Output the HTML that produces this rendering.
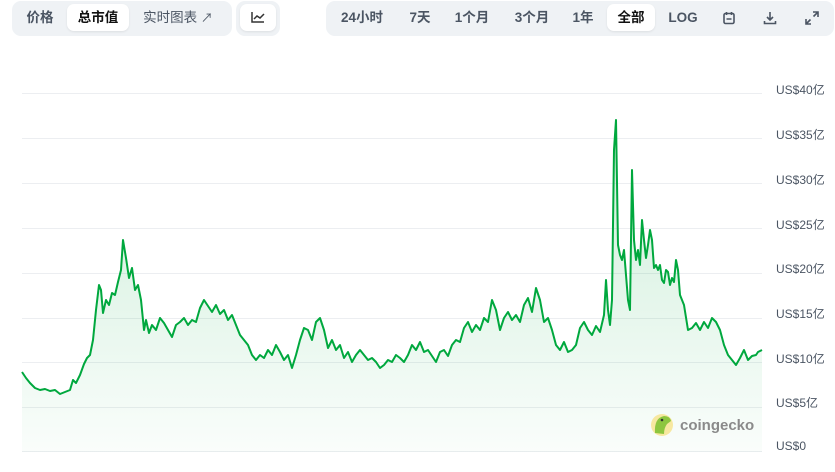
<!DOCTYPE html>
<html><head><meta charset="utf-8"><style>
body{margin:0;width:835px;height:472px;background:#fff;font-family:"Liberation Sans","Noto Sans CJK SC",sans-serif;position:relative;overflow:hidden}
.grp{position:absolute;top:1px;height:35px;background:#eff2f5;border-radius:9px}
.b{position:absolute;top:4px;height:27px;line-height:27px;font-size:13.5px;font-weight:bold;color:#4b5563;text-align:center}
.b.act{background:#fff;border-radius:7px;color:#111;box-shadow:0 1px 2px rgba(0,0,0,.08)}
.lbl{position:absolute;left:776px;font-size:12px;color:#4b5563}
</style></head><body>
<div class="grp" style="left:12px;width:220px"></div>
<div class="b" style="left:18px;width:44px">价格</div>
<div class="b act" style="left:67px;width:62px">总市值</div>
<div class="b" style="left:136px;width:84px;font-weight:normal;color:#4b5563">实时图表 <span style="font-size:12px">↗</span></div>
<div class="grp" style="left:236px;width:44px"></div>
<div class="b act" style="left:240px;width:36px"><svg width="14" height="12" viewBox="0 0 14 12" style="vertical-align:-1px"><path d="M1 1V11H13M3 8l3-3 3 2 4-4" fill="none" stroke="#333" stroke-width="1.5"/></svg></div>
<div class="grp" style="left:326px;width:508px"></div>
<div class="b" style="left:334px;width:56px">24小时</div>
<div class="b" style="left:402px;width:36px">7天</div>
<div class="b" style="left:448px;width:48px">1个月</div>
<div class="b" style="left:506px;width:52px">3个月</div>
<div class="b" style="left:568px;width:30px">1年</div>
<div class="b act" style="left:607px;width:48px">全部</div>
<div class="b" style="left:664px;width:38px">LOG</div>
<svg style="position:absolute;left:722px;top:11px" width="14" height="14" viewBox="0 0 14 14"><rect x="2" y="2.5" width="10" height="10" rx="1.5" fill="none" stroke="#4b5563" stroke-width="1.6"/><path d="M4.5 1v3M9.5 1v3M4.5 8h5" stroke="#4b5563" stroke-width="1.6"/></svg>
<svg style="position:absolute;left:763px;top:11px" width="14" height="14" viewBox="0 0 14 14"><path d="M7 1v8M4 6l3 3 3-3M1.5 10v2.5h11V10" fill="none" stroke="#4b5563" stroke-width="1.6"/></svg>
<svg style="position:absolute;left:805px;top:11px" width="14" height="14" viewBox="0 0 14 14"><path d="M8 1h5v5M13 1L8.5 5.5M6 13H1V8M1 13l4.5-4.5" fill="none" stroke="#4b5563" stroke-width="1.6"/></svg>
<svg style="position:absolute;left:0;top:0" width="835" height="472">
<defs><linearGradient id="g" x1="0" y1="0" x2="0" y2="1"><stop offset="0" stop-color="#00a83e" stop-opacity=".2"/><stop offset="1" stop-color="#00a83e" stop-opacity=".02"/></linearGradient></defs>
<g stroke="#eceef1" stroke-width="1">
<path d="M22 93.5H762M22 138.5H762M22 183.5H762M22 228.5H762M22 273.5H762M22 318.5H762M22 362.5H762M22 407.5H762M22 451.5H762"/></g>
<polygon id="p" fill="url(#g)" points="22,452 22,372 26,378 30,383 35,388 40,390 45,389 50,391 55,390 60,394 65,392 70,390 73,380 76,383 80,375 84,364 87,358 90,355 93,340 96,310 99,285 101,290 103,313 106,300 109,305 112,293 115,295 118,282 121,270 123,240 126,258 129,278 132,268 135,290 138,285 141,300 144,330 146,320 149,333 152,325 156,330 160,318 164,323 168,330 172,337 176,325 180,322 184,318 188,325 192,320 196,322 200,308 204,300 208,306 212,312 216,305 220,314 224,310 228,320 232,315 236,325 240,335 244,340 248,345 252,355 256,360 260,355 264,358 268,350 272,355 276,345 280,352 284,360 288,355 292,368 296,355 300,340 304,328 308,330 312,340 316,322 320,318 324,330 328,348 332,340 336,350 340,345 344,358 348,352 352,362 356,355 360,350 364,355 368,360 372,358 376,362 380,368 384,365 388,360 392,362 396,355 400,358 404,362 408,355 412,345 416,350 420,342 424,352 428,350 432,356 436,362 440,352 444,350 448,356 452,345 456,340 460,342 464,328 468,322 472,332 476,325 480,330 484,318 488,322 492,300 496,310 500,330 504,318 508,312 512,320 516,315 520,322 524,305 528,298 532,312 536,288 540,300 544,322 548,318 552,330 556,345 560,350 564,342 568,352 572,350 576,345 580,328 584,322 588,330 592,335 596,326 600,332 604,315 606,280 608,310 610,325 612,300 614,150 616,120 618,245 620,255 622,260 624,250 626,275 628,300 630,310 632,170 634,240 636,260 638,250 640,265 642,220 644,240 646,258 648,245 650,230 652,240 654,268 656,265 658,270 660,265 662,280 664,283 666,270 668,272 670,285 672,278 674,282 676,260 678,270 680,295 684,305 688,330 692,328 696,323 700,330 704,322 708,328 712,318 716,322 720,330 724,345 728,355 732,360 736,365 740,358 744,350 748,360 752,356 756,355 758,352 762,350 762,452"/>
<polyline fill="none" stroke="#00a83e" stroke-width="2" stroke-linejoin="round" points="22,372 26,378 30,383 35,388 40,390 45,389 50,391 55,390 60,394 65,392 70,390 73,380 76,383 80,375 84,364 87,358 90,355 93,340 96,310 99,285 101,290 103,313 106,300 109,305 112,293 115,295 118,282 121,270 123,240 126,258 129,278 132,268 135,290 138,285 141,300 144,330 146,320 149,333 152,325 156,330 160,318 164,323 168,330 172,337 176,325 180,322 184,318 188,325 192,320 196,322 200,308 204,300 208,306 212,312 216,305 220,314 224,310 228,320 232,315 236,325 240,335 244,340 248,345 252,355 256,360 260,355 264,358 268,350 272,355 276,345 280,352 284,360 288,355 292,368 296,355 300,340 304,328 308,330 312,340 316,322 320,318 324,330 328,348 332,340 336,350 340,345 344,358 348,352 352,362 356,355 360,350 364,355 368,360 372,358 376,362 380,368 384,365 388,360 392,362 396,355 400,358 404,362 408,355 412,345 416,350 420,342 424,352 428,350 432,356 436,362 440,352 444,350 448,356 452,345 456,340 460,342 464,328 468,322 472,332 476,325 480,330 484,318 488,322 492,300 496,310 500,330 504,318 508,312 512,320 516,315 520,322 524,305 528,298 532,312 536,288 540,300 544,322 548,318 552,330 556,345 560,350 564,342 568,352 572,350 576,345 580,328 584,322 588,330 592,335 596,326 600,332 604,315 606,280 608,310 610,325 612,300 614,150 616,120 618,245 620,255 622,260 624,250 626,275 628,300 630,310 632,170 634,240 636,260 638,250 640,265 642,220 644,240 646,258 648,245 650,230 652,240 654,268 656,265 658,270 660,265 662,280 664,283 666,270 668,272 670,285 672,278 674,282 676,260 678,270 680,295 684,305 688,330 692,328 696,323 700,330 704,322 708,328 712,318 716,322 720,330 724,345 728,355 732,360 736,365 740,358 744,350 748,360 752,356 756,355 758,352 762,350"/>
<circle cx="662" cy="425" r="11" fill="#f7e8a0"/>
<path d="M655 433 Q654 418 664 416 Q670 416 671 421 L667 424 Q664 428 664 434 Z" fill="#8dc63f"/>
<circle cx="662" cy="420" r="1.3" fill="#333"/>
<text x="680" y="430" font-family="Liberation Sans,sans-serif" font-weight="bold" font-size="15" fill="#8a8a8a">coingecko</text>
</svg>
<div class="lbl" style="top:81px">US$40亿</div>
<div class="lbl" style="top:126px">US$35亿</div>
<div class="lbl" style="top:171px">US$30亿</div>
<div class="lbl" style="top:216px">US$25亿</div>
<div class="lbl" style="top:260px">US$20亿</div>
<div class="lbl" style="top:305px">US$15亿</div>
<div class="lbl" style="top:350px">US$10亿</div>
<div class="lbl" style="top:394px">US$5亿</div>
<div class="lbl" style="top:439px">US$0</div>
</body></html>
